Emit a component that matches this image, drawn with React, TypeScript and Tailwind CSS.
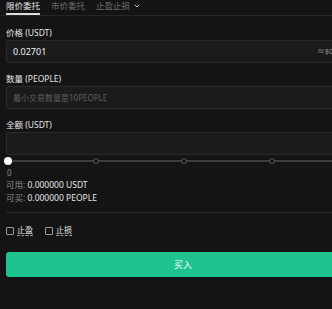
import { ChevronDown } from "lucide-react";

const font = { fontFamily: '"Noto Sans", "Noto Sans CJK SC", sans-serif' };

function Field({ label, children }: { label: string; children?: React.ReactNode }) {
  return (
    <div>
      <div className="h-[12px] text-[8.5px] leading-[12px] text-[#e6e6e6]">{label}</div>
      <div className="mt-[1px] flex h-[23px] w-[356px] items-center justify-between rounded-[2px] border border-[#2a2a2a] bg-[#1b1b1b] pl-[6px] pr-[17px]">
        {children}
      </div>
    </div>
  );
}

export default function App() {
  const marks = [0, 25, 50, 75, 100];

  return (
    <div className="h-[309px] w-[332px] overflow-hidden bg-[#141414]" style={font}>
      <div className="w-[368px]">
        {/* order type tabs */}
        <div className="flex h-[16px] items-start gap-[11px] border-b border-[#262626] px-[6px]">
          <div className="h-[15px] border-b-2 border-[#dcdcdc] text-[8.5px] leading-[11px] text-[#e8e8e8]">
            限价委托
          </div>
          <div className="text-[8.5px] leading-[11px] text-[#6f6f6f]">市价委托</div>
          <div className="flex items-center gap-[3px] text-[8.5px] leading-[11px] text-[#6f6f6f]">
            止盈止损
            <ChevronDown size={8} strokeWidth={3} className="text-[#c8c8c8]" />
          </div>
        </div>

        <div className="px-[6px] pt-[11px]">
          <Field label="价格 (USDT)">
            <span className="text-[9px] text-[#f0f0f0]">0.02701</span>
            <span className="text-[7.5px] text-[#9a9a9a]">≈$0.00</span>
          </Field>

          <div className="mt-[10px]">
            <Field label="数量 (PEOPLE)">
              <span className="text-[8px] text-[#5e5e5e]">最小交易数量是10PEOPLE</span>
            </Field>
          </div>

          <div className="mt-[10px]">
            <Field label="全额 (USDT)" />
          </div>

          {/* slider */}
          <div className="relative h-[12px] w-[356px]">
            <div className="absolute left-[2px] right-[2px] top-[5px] h-[2px] bg-[#3d3d3d]" />
            {marks.map((m, i) => (
              <div
                key={m}
                className={
                  i === 0
                    ? "absolute top-[2px] h-[8px] w-[8px] rounded-full bg-white"
                    : "absolute top-[3px] h-[6px] w-[6px] rounded-full border border-[#5a5a5a] bg-[#141414]"
                }
                style={{ left: 2 + i * 88 - (i === 0 ? 4 : 3) }}
              />
            ))}
          </div>
          <div className="h-[12px] pl-[1px] text-[8px] leading-[12px] text-[#8a8a8a]">0</div>

          <div className="text-[8.5px] leading-[12.5px]">
            <div>
              <span className="text-[#8a8a8a]">可用: </span>
              <span className="text-[#e6e6e6]">0.000000 USDT</span>
            </div>
            <div>
              <span className="text-[#8a8a8a]">可买: </span>
              <span className="text-[#e6e6e6]">0.000000 PEOPLE</span>
            </div>
          </div>
        </div>

        <div className="ml-[6px] mt-[8px] h-px bg-[#2a2a2a]" />

        <div className="flex items-center gap-[12px] px-[6px] pt-[12px]">
          <label className="flex items-center gap-[3px]">
            <span className="h-[8px] w-[8px] rounded-[1px] border border-[#9a9a9a]" />
            <span className="border-b border-dashed border-[#9a9a9a] text-[8px] leading-[10px] text-[#e6e6e6]">止盈</span>
          </label>
          <label className="flex items-center gap-[3px]">
            <span className="h-[8px] w-[8px] rounded-[1px] border border-[#9a9a9a]" />
            <span className="border-b border-dashed border-[#9a9a9a] text-[8px] leading-[10px] text-[#e6e6e6]">止损</span>
          </label>
        </div>

        <div className="px-[6px] pt-[16px]">
          <button className="flex h-[25px] w-[354px] items-center justify-center rounded-[3px] bg-[#1ec38f] text-[9px] text-white">
            买入
          </button>
        </div>
      </div>
    </div>
  );
}
